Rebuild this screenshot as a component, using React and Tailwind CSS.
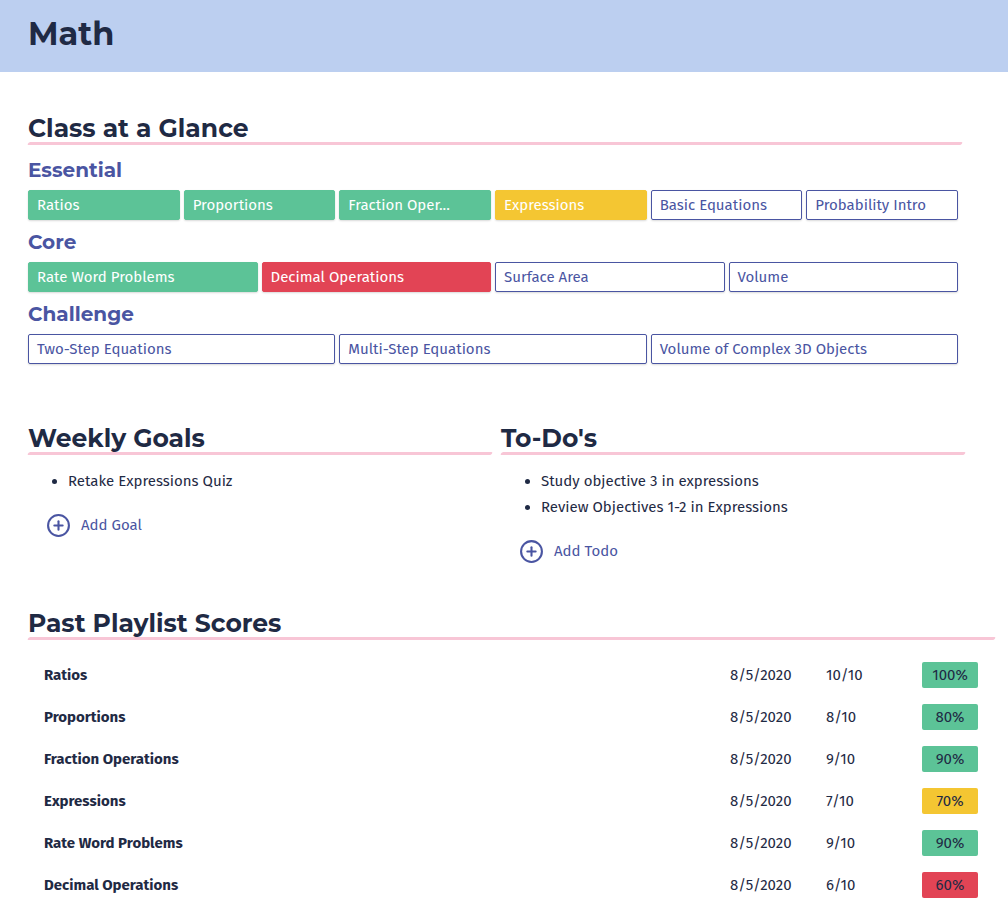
import { CirclePlus } from "lucide-react";

const essential = [
  { name: "Ratios", tone: "green" },
  { name: "Proportions", tone: "green" },
  { name: "Fraction Oper...", tone: "green" },
  { name: "Expressions", tone: "yellow" },
  { name: "Basic Equations", tone: "open" },
  { name: "Probability Intro", tone: "open" },
];

const core = [
  { name: "Rate Word Problems", tone: "green" },
  { name: "Decimal Operations", tone: "red" },
  { name: "Surface Area", tone: "open" },
  { name: "Volume", tone: "open" },
];

const challenge = [
  { name: "Two-Step Equations", tone: "open" },
  { name: "Multi-Step Equations", tone: "open" },
  { name: "Volume of Complex 3D Objects", tone: "open" },
];

const scores = [
  { name: "Ratios", date: "8/5/2020", score: "10/10", pct: "100%", tone: "green" },
  { name: "Proportions", date: "8/5/2020", score: "8/10", pct: "80%", tone: "green" },
  { name: "Fraction Operations", date: "8/5/2020", score: "9/10", pct: "90%", tone: "green" },
  { name: "Expressions", date: "8/5/2020", score: "7/10", pct: "70%", tone: "yellow" },
  { name: "Rate Word Problems", date: "8/5/2020", score: "9/10", pct: "90%", tone: "green" },
  { name: "Decimal Operations", date: "8/5/2020", score: "6/10", pct: "60%", tone: "red" },
];

const chipTone = {
  green: "bg-[#5cc397] border-[#5cc397] text-white",
  yellow: "bg-[#f4c632] border-[#f4c632] text-white",
  red: "bg-[#e24455] border-[#e24455] text-white",
  open: "bg-white border-[#4a55a2] text-[#4a55a2]",
};

const badgeTone = {
  green: "bg-[#5cc397]",
  yellow: "bg-[#f4c632]",
  red: "bg-[#e24455]",
};

const heading = "font-['Montserrat','DejaVu_Sans',sans-serif] font-bold text-[#1f2a44]";

function SectionTitle({ children, className = "" }) {
  return (
    <div className={className}>
      <h2 className={`${heading} text-[25px] leading-[28px]`}>{children}</h2>
      <div className="h-[3px] bg-[#f8c6d6] rounded-full -skew-x-[30deg]" />
    </div>
  );
}

function ChipRow({ items, cols }) {
  return (
    <div className={`grid ${cols} gap-1`}>
      {items.map((item) => (
        <div
          key={item.name}
          className={`h-[30px] flex items-center px-2 border rounded-[2px] shadow-[0_1px_2px_rgba(0,0,0,0.15)] text-[15px] truncate ${chipTone[item.tone]}`}
        >
          {item.name}
        </div>
      ))}
    </div>
  );
}

function Level({ title, children }) {
  return (
    <div>
      <h3 className={`${heading} text-[20px] leading-[26px] text-[#4a55a2] mt-[9px] mb-[7px]`}>{title}</h3>
      {children}
    </div>
  );
}

function AddButton({ label }) {
  return (
    <button className="flex items-center gap-[10px] text-[#4a55a2] text-[15px] ml-[18px]">
      <CirclePlus size={25} strokeWidth={2} />
      {label}
    </button>
  );
}

export default function App() {
  return (
    <div className="min-h-screen bg-white font-['Fira_Sans','Noto_Sans',sans-serif] text-[#1f2a44]">
      <header className="h-[72px] bg-[#bccff0] flex items-center px-7 pb-[5px]">
        <h1 className={`${heading} text-[32px]`}>Math</h1>
      </header>

      <main className="pl-7 pr-[50px] pt-[42px] pb-10">
        <SectionTitle className="mr-[-4px]">Class at a Glance</SectionTitle>
        <div className="pt-[3px]">
          <Level title="Essential">
            <ChipRow items={essential} cols="grid-cols-6" />
          </Level>
          <Level title="Core">
            <ChipRow items={core} cols="grid-cols-4" />
          </Level>
          <Level title="Challenge">
            <ChipRow items={challenge} cols="grid-cols-3" />
          </Level>
        </div>

        <div className="grid grid-cols-2 gap-[9px] mt-[60px] mr-[-7px]">
          <div>
            <SectionTitle>Weekly Goals</SectionTitle>
            <ul className="list-disc pl-10 mt-[13px] text-[15px] leading-[26px]">
              <li>Retake Expressions Quiz</li>
            </ul>
            <div className="mt-[19px]">
              <AddButton label="Add Goal" />
            </div>
          </div>
          <div>
            <SectionTitle>To-Do's</SectionTitle>
            <ul className="list-disc pl-10 mt-[13px] text-[15px] leading-[26px]">
              <li>Study objective 3 in expressions</li>
              <li>Review Objectives 1-2 in Expressions</li>
            </ul>
            <div className="mt-[19px]">
              <AddButton label="Add Todo" />
            </div>
          </div>
        </div>

        <SectionTitle className="mt-[45px] mr-[-37px]">Past Playlist Scores</SectionTitle>
        <div className="mt-[14px] pl-4 mr-[-20px] text-[15px]">
          {scores.map((row) => (
            <div key={row.name} className="flex items-center h-[42px]">
              <div className="flex-1 font-bold">{row.name}</div>
              <div className="w-[96px]">{row.date}</div>
              <div className="w-[96px]">{row.score}</div>
              <div
                className={`w-[56px] h-[26px] flex items-center justify-center rounded-[2px] ${badgeTone[row.tone]}`}
              >
                {row.pct}
              </div>
            </div>
          ))}
        </div>
      </main>
    </div>
  );
}
